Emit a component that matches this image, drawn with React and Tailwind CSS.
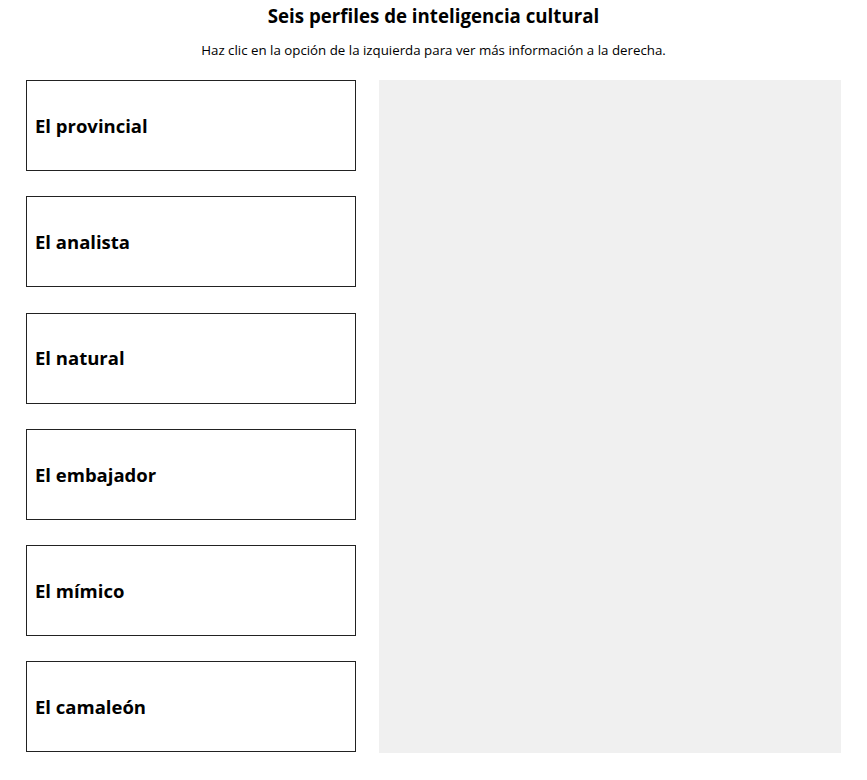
const perfiles = [
  'El provincial',
  'El analista',
  'El natural',
  'El embajador',
  'El mímico',
  'El camaleón',
]

export default function App() {
  return (
    <div className="min-h-[780px] bg-white text-black font-['Open_Sans',sans-serif] px-[26px]">
      <h1 className="pt-[3px] text-center text-[18.7px] font-bold leading-[26px]">
        Seis perfiles de inteligencia cultural
      </h1>
      <p className="mt-[12px] text-center text-[13.3px] leading-[18px]">
        Haz clic en la opción de la izquierda para ver más información a la derecha.
      </p>
      <div className="mt-[21px] flex gap-[23px]">
        <div className="flex w-[330px] shrink-0 flex-col gap-[25.3px]">
          {perfiles.map((p) => (
            <button
              key={p}
              className="flex h-[91px] items-center border border-[#222] bg-white px-[8px] text-left text-[18.5px] font-bold"
            >
              {p}
            </button>
          ))}
        </div>
        <div className="h-[673px] flex-1 bg-[#f0f0f0]" />
      </div>
    </div>
  )
}
